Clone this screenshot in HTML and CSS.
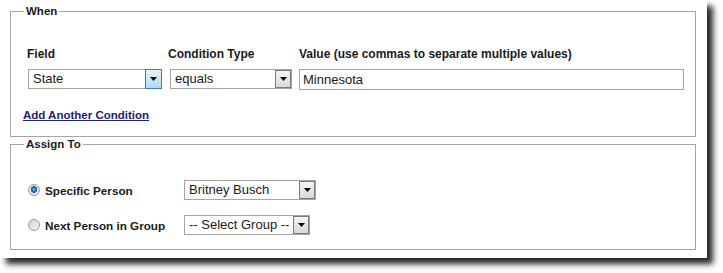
FILE: index.html
```html
<!DOCTYPE html>
<html lang="en">

<head>
    <meta charset="UTF-8">
    <title>Assignment Rule</title>
    <link rel="stylesheet" href="styles.css">
</head>

<body>
    <div class="panel">

        <fieldset class="group group-when">
            <legend>When</legend>
            <div class="condition">
                <label class="caption">Field</label>
                <label class="caption">Condition Type</label>
                <label class="caption">Value (use commas to separate multiple values)</label>

                <div class="dropdown dropdown-active select-field">
                    <span class="dropdown-text">State</span>
                    <span class="dropdown-btn"><svg width="7" height="4" viewBox="0 0 7 4"><polygon points="0,0 7,0 3.5,4" fill="#000"/></svg></span>
                </div>
                <div class="dropdown select-type">
                    <span class="dropdown-text">equals</span>
                    <span class="dropdown-btn"><svg width="7" height="4" viewBox="0 0 7 4"><polygon points="0,0 7,0 3.5,4" fill="#000"/></svg></span>
                </div>
                <input class="text-value" type="text" value="Minnesota">
            </div>
            <a href="#" class="add-link">Add Another Condition</a>
        </fieldset>

        <fieldset class="group group-assign">
            <legend>Assign To</legend>
            <div class="assign-rows">
                <div class="assign-option">
                    <span class="radio radio-checked"></span>
                    <span class="option-label">Specific Person</span>
                </div>
                <div class="dropdown select-person">
                    <span class="dropdown-text">Britney Busch</span>
                    <span class="dropdown-btn"><svg width="7" height="4" viewBox="0 0 7 4"><polygon points="0,0 7,0 3.5,4" fill="#000"/></svg></span>
                </div>

                <div class="assign-option">
                    <span class="radio"></span>
                    <span class="option-label">Next Person in Group</span>
                </div>
                <div class="dropdown select-group">
                    <span class="dropdown-text">-- Select Group --</span>
                    <span class="dropdown-btn"><svg width="7" height="4" viewBox="0 0 7 4"><polygon points="0,0 7,0 3.5,4" fill="#000"/></svg></span>
                </div>
            </div>
        </fieldset>

    </div>
</body>

</html>
```

FILE: styles.css
```css
html,
body {
    min-height: 273px;
}

body {
    margin: 0;
    padding: 0;
    font-family: "Liberation Sans", Arial, sans-serif;
    background-color: #fff;
    color: #1a1a1a;
}

.panel {
    width: 686px;
    padding: 4px 11px 8px 10px;
    background-color: #fff;
    box-shadow: 6px 6px 6px rgba(0, 0, 0, 0.85);
}

.group {
    margin: 0;
    min-width: 0;
    border: 1px solid #a5a5a5;
    padding: 0 0 0 16px;
}

.group legend {
    font-size: 11.5px;
    font-weight: bold;
    line-height: 14px;
    padding: 0 2px;
    margin-left: -3px;
}

.group-when {
    padding-top: 29px;
    padding-bottom: 13px;
}

.condition {
    display: grid;
    grid-template-columns: 141px 131px 385px;
    row-gap: 8px;
    align-items: start;
}

.caption {
    font-size: 12px;
    font-weight: bold;
    line-height: 14px;
}

.dropdown {
    display: flex;
    align-items: stretch;
    box-sizing: border-box;
    height: 20px;
    border: 1px solid #a5a5a5;
    background-color: #fff;
    font-size: 13px;
}

.dropdown-text {
    flex: 1;
    padding-left: 4px;
    line-height: 18px;
    white-space: nowrap;
    overflow: hidden;
}

.dropdown-btn {
    display: flex;
    align-items: center;
    justify-content: center;
    box-sizing: border-box;
    width: 16px;
    border: 1px solid #7a7a7a;
    background: linear-gradient(#f4f4f4, #d9d9d9);
}

.dropdown-active .dropdown-btn {
    width: 17px;
    margin: -1px -1px -1px 0;
    height: 20px;
    border-color: #3c7fb1;
    background: linear-gradient(#e5f3fc, #b3d8f3);
}

.select-field {
    width: 134px;
    margin-left: 1px;
}

.select-type {
    width: 122px;
    margin-left: 2px;
}

.text-value {
    box-sizing: border-box;
    width: 385px;
    height: 21px;
    margin: 0;
    padding: 0 3px;
    border: 1px solid #a5a5a5;
    font-family: "Liberation Sans", Arial, sans-serif;
    font-size: 13px;
    color: #1a1a1a;
    outline: none;
}

.add-link {
    display: inline-block;
    margin-top: 18px;
    margin-left: -4px;
    font-size: 11.5px;
    font-weight: bold;
    line-height: 14px;
    color: #22226e;
}

.group-assign {
    padding-top: 29px;
    padding-bottom: 14px;
}

.assign-rows {
    display: grid;
    grid-template-columns: 157px auto;
    row-gap: 15px;
    align-items: center;
    justify-items: start;
}

.assign-option {
    display: flex;
    align-items: center;
}

.option-label {
    font-size: 11.7px;
    font-weight: bold;
}

.radio {
    box-sizing: border-box;
    width: 12px;
    height: 12px;
    margin-left: 1px;
    margin-right: 5px;
    border: 1px solid #9a9a9a;
    border-radius: 50%;
    background: linear-gradient(135deg, #d2d2d2, #f6f6f6);
}

.radio-checked {
    background:
        radial-gradient(circle at 50% 45%, #6fb8ef 0, #2a78c0 2px, #174e8a 3px, #f2f2f2 3.6px, #e0e0e0 5px);
}

.select-person {
    width: 132px;
}

.select-group {
    width: 126px;
}
```
